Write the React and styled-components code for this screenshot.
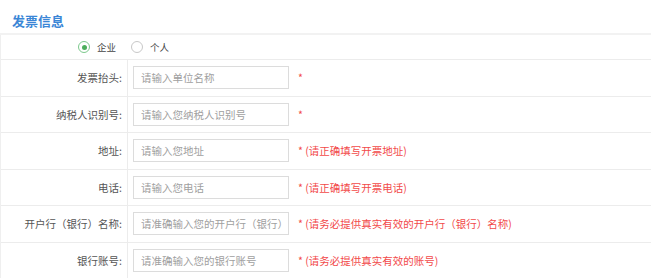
import React from "react";
import styled, { createGlobalStyle } from "styled-components";

const Global = createGlobalStyle`
  html, body { margin: 0; padding: 0; background: #fff; }
  body { font-family: "Noto Sans CJK SC", "Liberation Sans", sans-serif; }
  * { box-sizing: border-box; }
`;

const Page = styled.div`
  width: 651px;
  background: #fff;
`;

const Header = styled.div`
  height: 35px;
  padding: 14px 0 0 12px;
  border-bottom: 2px solid #f2f2f2;
  font-size: 13px;
  line-height: 13px;
  font-weight: 700;
  color: #3a86d6;
`;

const Table = styled.div`
  border-left: 1px solid #efefef;
`;

const RadioRow = styled.div`
  height: 25px;
  display: flex;
  align-items: center;
  padding-left: 77px;
  border-bottom: 1px solid #ececec;
  font-size: 9.5px;
  color: #444;
`;

const RadioItem = styled.label`
  display: flex;
  align-items: center;
  gap: 7px;
  margin-right: 15px;
`;

const RadioDot = styled.span`
  width: 12px;
  height: 12px;
  border-radius: 50%;
  border: 1px solid ${(p) => (p.$checked ? "#7cc98c" : "#c8c8c8")};
  display: flex;
  align-items: center;
  justify-content: center;
  &::after {
    content: "";
    width: 5px;
    height: 5px;
    border-radius: 50%;
    background: ${(p) => (p.$checked ? "#4cae5c" : "transparent")};
  }
`;

const Row = styled.div`
  display: grid;
  grid-template-columns: 127px 1fr;
  height: 36.5px;
  border-bottom: 1px solid #ececec;
`;

const Label = styled.div`
  display: flex;
  align-items: center;
  justify-content: flex-end;
  padding-right: 5px;
  border-right: 1px solid #ececec;
  font-size: 10.5px;
  color: #555;
  white-space: nowrap;
`;

const Field = styled.div`
  display: flex;
  align-items: center;
  padding-left: 5px;
  font-size: 10.5px;
`;

const Input = styled.input`
  width: 156px;
  height: 23px;
  border: 1px solid #dcdcdc;
  padding: 0 0 0 7px;
  font-family: inherit;
  font-size: 10.5px;
  color: #333;
  outline: none;
  &::placeholder { color: #a0a0a0; }
`;

const Hint = styled.span`
  margin-left: 9px;
  color: #f24a4a;
  white-space: nowrap;
`;

const rows = [
  { label: "发票抬头:", ph: "请输入单位名称", hint: "" },
  { label: "纳税人识别号:", ph: "请输入您纳税人识别号", hint: "" },
  { label: "地址:", ph: "请输入您地址", hint: "(请正确填写开票地址)" },
  { label: "电话:", ph: "请输入您电话", hint: "(请正确填写开票电话)" },
  { label: "开户行（银行）名称:", ph: "请准确输入您的开户行（银行）名称", hint: "(请务必提供真实有效的开户行（银行）名称)" },
  { label: "银行账号:", ph: "请准确输入您的银行账号", hint: "(请务必提供真实有效的账号)" },
];

export default function App() {
  return (
    <Page>
      <Global />
      <Header>发票信息</Header>
      <Table>
        <RadioRow>
          <RadioItem><RadioDot $checked />企业</RadioItem>
          <RadioItem><RadioDot />个人</RadioItem>
        </RadioRow>
        {rows.map((r) => (
          <Row key={r.label}>
            <Label>{r.label}</Label>
            <Field>
              <Input placeholder={r.ph} />
              <Hint>*{r.hint ? " " + r.hint : ""}</Hint>
            </Field>
          </Row>
        ))}
      </Table>
    </Page>
  );
}
